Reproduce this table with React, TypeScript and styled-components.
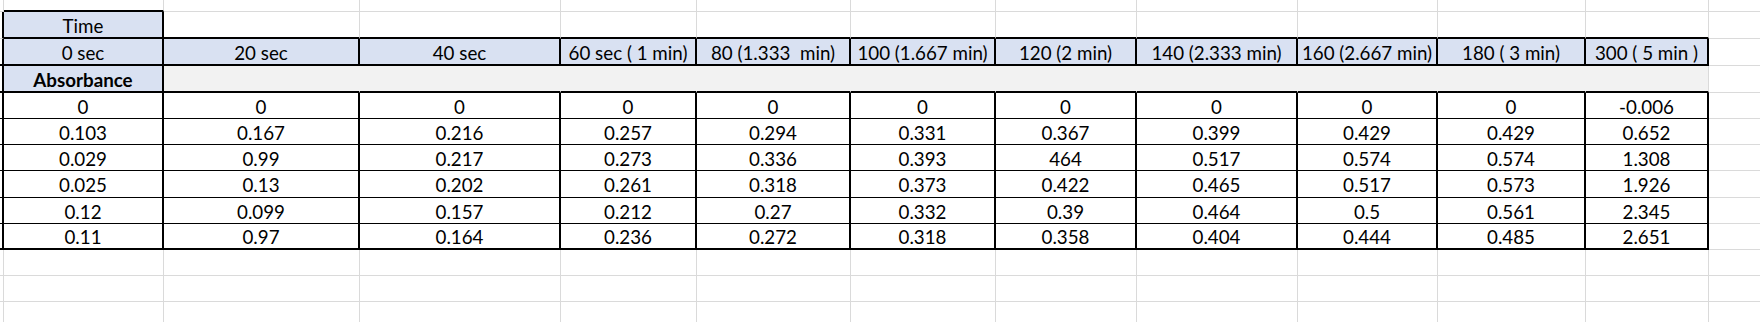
import styled, { createGlobalStyle } from "styled-components";

type Edge = "grid" | "thin" | "thick" | "none";
type Fill = "head" | "band" | undefined;

interface CellSpec {
  text?: string;
  fill?: Fill;
  right: Edge;
  bottom: Edge;
  bold?: boolean;
}

const GRID_COLOR = "#dadada";
const INK = "#000000";

const COLUMN_WIDTHS = [4, 160, 196, 201, 136, 154, 145, 141, 161, 140, 148, 123, 60];
const ROW_HEIGHTS = [12, 27, 27, 27, 26, 26, 26, 27, 26, 26, 26, 26, 26];

const HEADERS = [
  "0 sec",
  "20 sec",
  "40 sec",
  "60 sec ( 1 min)",
  "80 (1.333  min)",
  "100 (1.667 min)",
  "120 (2 min)",
  "140 (2.333 min)",
  "160 (2.667 min)",
  "180 ( 3 min)",
  "300 ( 5 min )",
];

const READINGS = [
  ["0", "0", "0", "0", "0", "0", "0", "0", "0", "0", "-0.006"],
  ["0.103", "0.167", "0.216", "0.257", "0.294", "0.331", "0.367", "0.399", "0.429", "0.429", "0.652"],
  ["0.029", "0.99", "0.217", "0.273", "0.336", "0.393", "464", "0.517", "0.574", "0.574", "1.308"],
  ["0.025", "0.13", "0.202", "0.261", "0.318", "0.373", "0.422", "0.465", "0.517", "0.573", "1.926"],
  ["0.12", "0.099", "0.157", "0.212", "0.27", "0.332", "0.39", "0.464", "0.5", "0.561", "2.345"],
  ["0.11", "0.97", "0.164", "0.236", "0.272", "0.318", "0.358", "0.404", "0.444", "0.485", "2.651"],
];

const LAST_COL = COLUMN_WIDTHS.length - 1;
const TABLE_END = 11; // column L

// works out every cell of the visible sheet, row by row
function buildSheet(): CellSpec[][] {
  const rows: CellSpec[][] = [];
  const empty = (): CellSpec => ({ right: "grid", bottom: "grid" });

  for (let r = 0; r < ROW_HEIGHTS.length; r++) {
    const row: CellSpec[] = [];
    for (let c = 0; c <= LAST_COL; c++) {
      const cell = empty();
      const inTable = c >= 1 && c <= TABLE_END;

      if (r === 0 && c === 1) cell.bottom = "thick";

      if (r === 1) {
        if (c === 0) cell.right = "thick";
        if (c === 1) {
          cell.text = "Time";
          cell.fill = "head";
          cell.right = "thick";
        }
        if (inTable) cell.bottom = "thick";
      }

      if (r === 2) {
        if (c === 0) {
          cell.right = "thick";
          cell.bottom = "thick";
        }
        if (inTable) {
          cell.text = HEADERS[c - 1];
          cell.fill = "head";
          cell.right = "thick";
          cell.bottom = "thick";
        }
      }

      if (r === 3) {
        if (c === 0) {
          cell.right = "thick";
          cell.bottom = "thick";
        }
        if (c === 1) {
          cell.text = "Absorbance";
          cell.fill = "head";
          cell.bold = true;
          cell.right = "thick";
          cell.bottom = "thick";
        } else if (inTable) {
          cell.fill = "band";
          cell.right = c === TABLE_END ? "grid" : "none";
          cell.bottom = "thick";
        }
      }

      if (r >= 4 && r <= 9) {
        const edge: Edge = r === 9 ? "thick" : "thin";
        if (c === 0) {
          cell.right = "thick";
          cell.bottom = edge;
        }
        if (inTable) {
          cell.text = READINGS[r - 4][c - 1];
          cell.right = "thick";
          cell.bottom = edge;
        }
      }

      row.push(cell);
    }
    rows.push(row);
  }
  return rows;
}

const edgeCss = (edge: Edge) => {
  switch (edge) {
    case "thick":
      return `2px solid ${INK}`;
    case "thin":
      return `1px solid ${INK}`;
    case "none":
      return "1px solid transparent";
    default:
      return `1px solid ${GRID_COLOR}`;
  }
};

const fillColor = (fill: Fill) => {
  if (fill === "head") return "#d9e1f2";
  if (fill === "band") return "#f2f2f2";
  return "#ffffff";
};

const GlobalStyle = createGlobalStyle`
  html, body {
    margin: 0;
    padding: 0;
    background: #ffffff;
  }
  body {
    width: 1760px;
    height: 322px;
    overflow: hidden;
  }
`;

const Sheet = styled.div`
  display: grid;
  grid-template-columns: ${COLUMN_WIDTHS.map((w) => `${w}px`).join(" ")};
  grid-template-rows: ${ROW_HEIGHTS.map((h) => `${h}px`).join(" ")};
  font-family: Lato, "Liberation Sans", Arial, sans-serif;
  font-size: 18.75px;
  color: #000000;
`;

const Cell = styled.div<{ $fill: Fill; $right: Edge; $bottom: Edge; $bold?: boolean }>`
  box-sizing: border-box;
  display: flex;
  align-items: center;
  justify-content: center;
  padding-top: 3px;
  overflow: hidden;
  white-space: pre;
  background: ${(p) => fillColor(p.$fill)};
  border-right: ${(p) => edgeCss(p.$right)};
  border-bottom: ${(p) => edgeCss(p.$bottom)};
  font-weight: ${(p) => (p.$bold ? 700 : 400)};
  line-height: 1;
`;

export default function App() {
  const rows = buildSheet();
  return (
    <>
      <GlobalStyle />
      <Sheet>
        {rows.map((row, r) =>
          row.map((cell, c) => (
            <Cell
              key={`${r}-${c}`}
              $fill={cell.fill}
              $right={cell.right}
              $bottom={cell.bottom}
              $bold={cell.bold}
            >
              {cell.text}
            </Cell>
          ))
        )}
      </Sheet>
    </>
  );
}
